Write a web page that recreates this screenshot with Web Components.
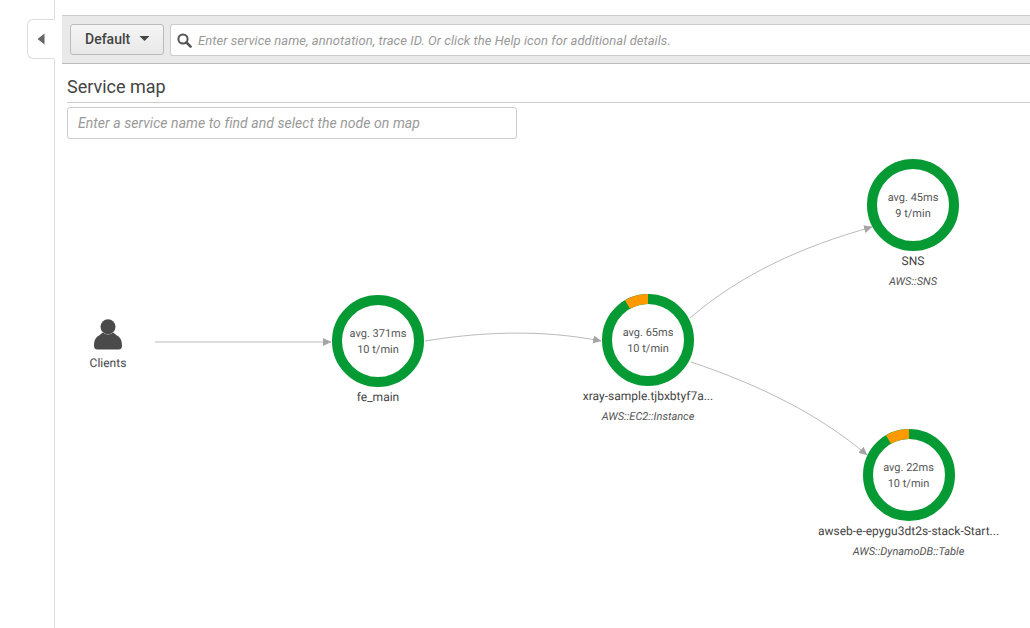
<!DOCTYPE html>
<html><head><meta charset="utf-8"><style>
html,body{margin:0;padding:0;background:#fff;overflow:hidden}
body{font-family:Roboto,"Liberation Sans",sans-serif;color:#444;width:1030px;height:628px}
</style></head><body>
<xr-app></xr-app>
<template id="t-app"><style>
:host{display:flex;width:1030px;height:628px;box-sizing:border-box}
.rail{width:55px;flex:none;box-sizing:border-box;border-right:1px solid #ddd;padding-top:19px;display:flex;justify-content:flex-end}
.tab{width:28px;height:40px;box-sizing:border-box;margin-right:-1px;background:#fff;border:1px solid #ddd;border-right:1px solid #fff;border-radius:6px 0 0 6px;display:flex;align-items:center;justify-content:center;position:relative;padding-right:1px}
.tab svg{display:block}
.main{flex:1;min-width:0;padding:15px 0 0 7px;display:flex;flex-direction:column}
</style>
<div class="rail"><div class="tab"><svg width="8" height="12" viewBox="0 0 8 12"><path d="M7.500 0.500V11.500L0.500 6Z" fill="#666"/></svg></div></div>
<div class="main"><xr-toolbar></xr-toolbar><xr-map></xr-map></div>
</template>
<template id="t-toolbar"><style>
:host{display:flex;flex:none;height:49px;box-sizing:border-box;background:#e9e9e9;border-top:1px solid #ccc;border-bottom:1px solid #bbb;padding:8px 0 0 8px;gap:6px;align-items:flex-start;margin-right:-2px}
.btn{width:94px;height:31px;box-sizing:border-box;border:1px solid #bbb;border-radius:3px;background:linear-gradient(#f5f5f5,#e8e8e8);font:500 14px Roboto,sans-serif;color:#444;display:flex;align-items:center;padding:0 0 2px 14px;gap:9px}
.btn svg{display:block}
.search{flex:1;height:32px;box-sizing:border-box;background:#fff;border:1px solid #ccc;border-right:0;border-radius:3px 0 0 3px;display:flex;align-items:center;padding-left:6px;gap:6px;font:italic 13px Roboto,sans-serif;letter-spacing:.05px;color:#999;white-space:nowrap}
</style>
<div class="btn"><span>Default</span><svg width="11" height="5" viewBox="0 0 11 5"><path d="M0.500 0H10.500L5.500 5Z" fill="#444"/></svg></div>
<div class="search"><svg width="15" height="15" viewBox="0 0 15 15"><circle cx="6" cy="6" r="4.600" fill="none" stroke="#555" stroke-width="2"/><path d="M9.500 9.500L13.600 13.600" stroke="#555" stroke-width="2.600" stroke-linecap="round"/></svg><span>Enter service name, annotation, trace ID. Or click the Help icon for additional details.</span></div>
</template>
<template id="t-map"><style>
:host{display:flex;flex-direction:column;flex:1;min-height:0;padding:0 0 0 5px;position:relative}
h2{margin:0;font:400 18px/21px Roboto,sans-serif;color:#444;padding:12px 0 5px;border-bottom:1px solid #ccc;margin-right:-2px}
.find{margin-top:4px;width:450px;height:32px;box-sizing:border-box;border:1px solid #ccc;border-radius:3px;font:italic 14px/30px Roboto,sans-serif;letter-spacing:.05px;color:#999;padding-left:10px;background:#fff}
.canvas{position:absolute;left:-62px;top:-64px;width:1030px;height:628px}
svg.edges{position:absolute;left:0;top:0;pointer-events:none}
</style>
<h2>Service map</h2>
<div class="find">Enter a service name to find and select the node on map</div>
<div class="canvas">
<svg class="edges" width="1030" height="628" viewBox="0 0 1030 628" fill="none" stroke="#bbb" stroke-width="1">
<defs><marker id="a" markerUnits="userSpaceOnUse" markerWidth="9" markerHeight="9" refX="8" refY="4.500" orient="auto"><path d="M0 0.500L8.500 4.500L0 8.500Z" fill="#a5a5a5" stroke="none"/></marker></defs>
<path d="M155 342H331" marker-end="url(#a)"/>
<path d="M425 341C480 332 540 329 601 341" marker-end="url(#a)"/>
<path d="M690 318C740 275 800 247 872 227" marker-end="url(#a)"/>
<path d="M691 362C760 385 820 415 867 455" marker-end="url(#a)"/>
</svg>
<xr-client style="left:68px;top:319px"></xr-client>
<xr-node style="left:378px;top:341px" avg="avg. 371ms" rate="10 t/min" name="fe_main"></xr-node>
<xr-node style="left:648px;top:340px" avg="avg. 65ms" rate="10 t/min" name="xray-sample.tjbxbtyf7a..." type="AWS::EC2::Instance" warn="0.0833"></xr-node>
<xr-node style="left:913px;top:205px" avg="avg. 45ms" rate="9 t/min" name="SNS" type="AWS::SNS"></xr-node>
<xr-node style="left:908.500px;top:475px" avg="avg. 22ms" rate="10 t/min" name="awseb-e-epygu3dt2s-stack-Start..." type="AWS::DynamoDB::Table" warn="0.0833"></xr-node>
</div>
</template>
<template id="t-node"><style>
:host{position:absolute;display:block;width:0;height:0;text-rendering:geometricPrecision}
svg{position:absolute;left:-46px;top:-46px;display:block}
.m{position:absolute;left:-40px;width:80px;text-align:center;font:11px/16px Roboto,sans-serif;color:#555}
.n{position:absolute;left:-120px;width:240px;top:48px;text-align:center;font:12px/16px Roboto,sans-serif;color:#444;white-space:nowrap}
.t{position:absolute;left:-120px;width:240px;top:70px;text-align:center;font:italic 11px/14px Roboto,sans-serif;color:#555;white-space:nowrap}
</style>
<svg width="92" height="92" viewBox="0 0 92 92"><circle cx="46" cy="46" r="41" fill="#fff" stroke="#069a34" stroke-width="10"/><path class="w" fill="none" stroke="#ff9900" stroke-width="10"/></svg>
<div class="m a" style="top:-15px"></div><div class="m r" style="top:1px"></div><div class="n"></div><div class="t"></div>
</template>
<template id="t-client"><style>
:host{position:absolute;display:flex;flex-direction:column;align-items:center;width:80px;text-rendering:geometricPrecision}
svg{display:block}
span{font:12px/16px Roboto,sans-serif;color:#444;margin-top:4px}
</style>
<svg width="30" height="32" viewBox="0 0 30 32"><path d="M1 27C1 21.500 2.500 18.500 6 16.500C7.500 15.500 9 14 10 13.500C12 16 18 16 20 13.500C21 14 22.500 15.500 24 16.500C27.500 18.500 29 21.500 29 27C29 29.500 27.500 30.500 25.500 30.500H4.500C2.500 30.500 1 29.500 1 27Z" fill="#4a4a4a"/><circle cx="15" cy="7.700" r="7.500" fill="#4a4a4a"/></svg>
<span>Clients</span>
</template>
<script>
function def(name,tid,init){customElements.define(name,class extends HTMLElement{constructor(){super();this.attachShadow({mode:'open'}).appendChild(document.getElementById(tid).content.cloneNode(true));}connectedCallback(){init&&init(this,this.shadowRoot)}})}
def('xr-app','t-app');def('xr-toolbar','t-toolbar');def('xr-map','t-map');def('xr-client','t-client');
def('xr-node','t-node',(h,s)=>{
 s.querySelector('.a').textContent=h.getAttribute('avg');
 s.querySelector('.r').textContent=h.getAttribute('rate');
 s.querySelector('.n').textContent=h.getAttribute('name');
 s.querySelector('.t').textContent=h.getAttribute('type')||'';
 const w=parseFloat(h.getAttribute('warn')||0);
 const p=s.querySelector('.w');
 if(w){const a=2*Math.PI*w;p.setAttribute('d',`M${46-41*Math.sin(a)} ${46-41*Math.cos(a)}A41 41 0 0 1 46 5`);}
});
</script>
</body></html>
